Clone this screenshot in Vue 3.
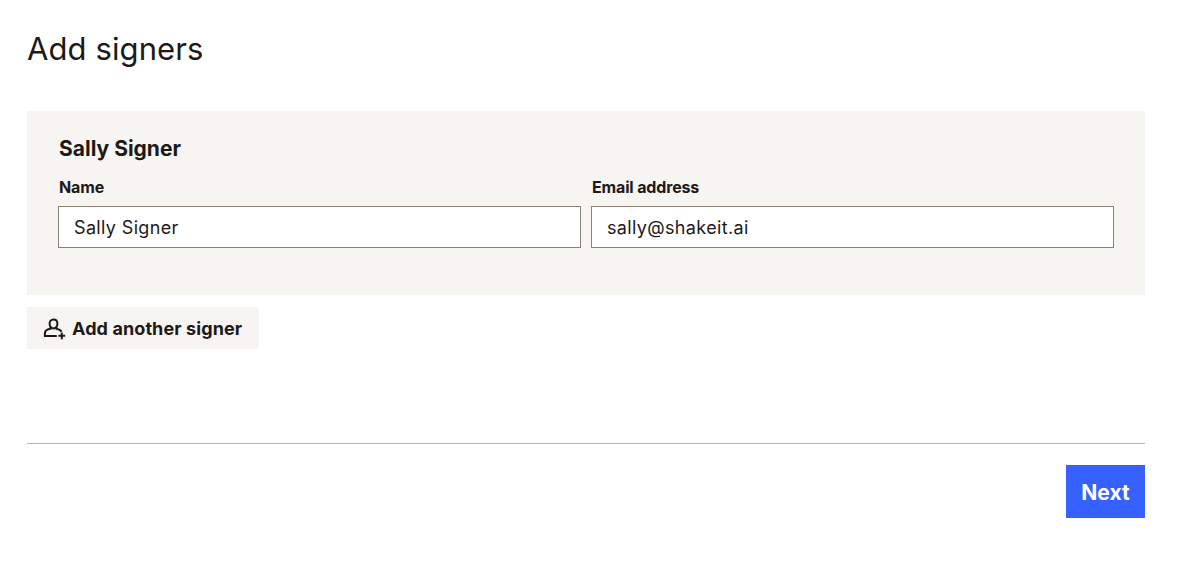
<script setup>
import { ref } from 'vue'

const name = ref('Sally Signer')
const email = ref('sally@shakeit.ai')
</script>

<template>
  <main class="page">
    <h1 class="title">Add signers</h1>

    <section class="signer-card">
      <h2 class="signer-name">Sally Signer</h2>
      <div class="fields">
        <div class="field">
          <label for="name">Name</label>
          <input id="name" v-model="name" type="text" />
        </div>
        <div class="field">
          <label for="email">Email address</label>
          <input id="email" v-model="email" type="text" />
        </div>
      </div>
    </section>

    <button type="button" class="add-btn">
      <svg class="add-icon" width="24" height="24" viewBox="0 0 24 24" fill="none" stroke="#1e1919" stroke-width="2" aria-hidden="true">
        <path d="M11.5 3.4 C9 3.4 7.6 5.2 7.6 7.6 C7.6 10 9 12.4 11.5 12.4 C14 12.4 15.4 10 15.4 7.6 C15.4 5.2 14 3.4 11.5 3.4 Z" />
        <path d="M8.4 11.2 L8.4 12.8 C5 13.4 2.9 15 2.9 17.4 L2.9 20 L14.8 20" />
        <path d="M14.6 11.2 L14.6 12.8 C16.8 13.2 18.6 14 19.6 15.6" />
        <path d="M19.8 16.4 V23.2 M16.4 19.8 H23.2" />
      </svg>
      Add another signer
    </button>

    <footer class="footer">
      <button type="button" class="next-btn">Next</button>
    </footer>
  </main>
</template>

<style scoped>
.page {
  width: 1118px;
  margin-left: 27px;
  font-family: Inter, "Liberation Sans", Arial, sans-serif;
  color: #1e1919;
}

.title {
  margin: 0;
  padding-top: 29px;
  height: 111px;
  box-sizing: border-box;
  font-size: 31px;
  line-height: 40px;
  font-weight: 400;
  letter-spacing: 0.1px;
}

.signer-card {
  height: 184px;
  box-sizing: border-box;
  padding: 24px 31px 0;
  background: #f7f5f2;
}

.signer-name {
  margin: 0 0 16px 1px;
  font-size: 21px;
  line-height: 27px;
  font-weight: 700;
}

.fields {
  display: flex;
  gap: 10px;
}

.field {
  width: 523px;
}

.field label {
  display: block;
  margin: 0 0 10px 1px;
  font-size: 16px;
  line-height: 18px;
  font-weight: 700;
  letter-spacing: -0.15px;
}

.field input {
  display: block;
  width: 100%;
  height: 42px;
  box-sizing: border-box;
  padding: 0 15px;
  border: 1px solid #8a8074;
  border-radius: 0;
  background: #fff;
  font-family: inherit;
  font-size: 18px;
  letter-spacing: 0.35px;
  color: #1e1919;
  outline: none;
}

.add-btn {
  display: flex;
  align-items: center;
  gap: 6px;
  width: 232px;
  height: 42px;
  margin-top: 12px;
  padding: 0 0 0 15px;
  border: 0;
  background: #f7f5f2;
  font-family: inherit;
  font-size: 18px;
  font-weight: 700;
  letter-spacing: 0.1px;
  color: #1e1919;
  white-space: nowrap;
}

.add-icon {
  flex: none;
}

.footer {
  display: flex;
  justify-content: flex-end;
  margin-top: 94px;
  padding-top: 21px;
  border-top: 1px solid #bbb5ae;
}

.next-btn {
  width: 79px;
  height: 53px;
  padding: 2px 0 0;
  border: 0;
  background: #3761ff;
  font-family: inherit;
  font-size: 21px;
  font-weight: 700;
  color: #fff;
}
</style>
